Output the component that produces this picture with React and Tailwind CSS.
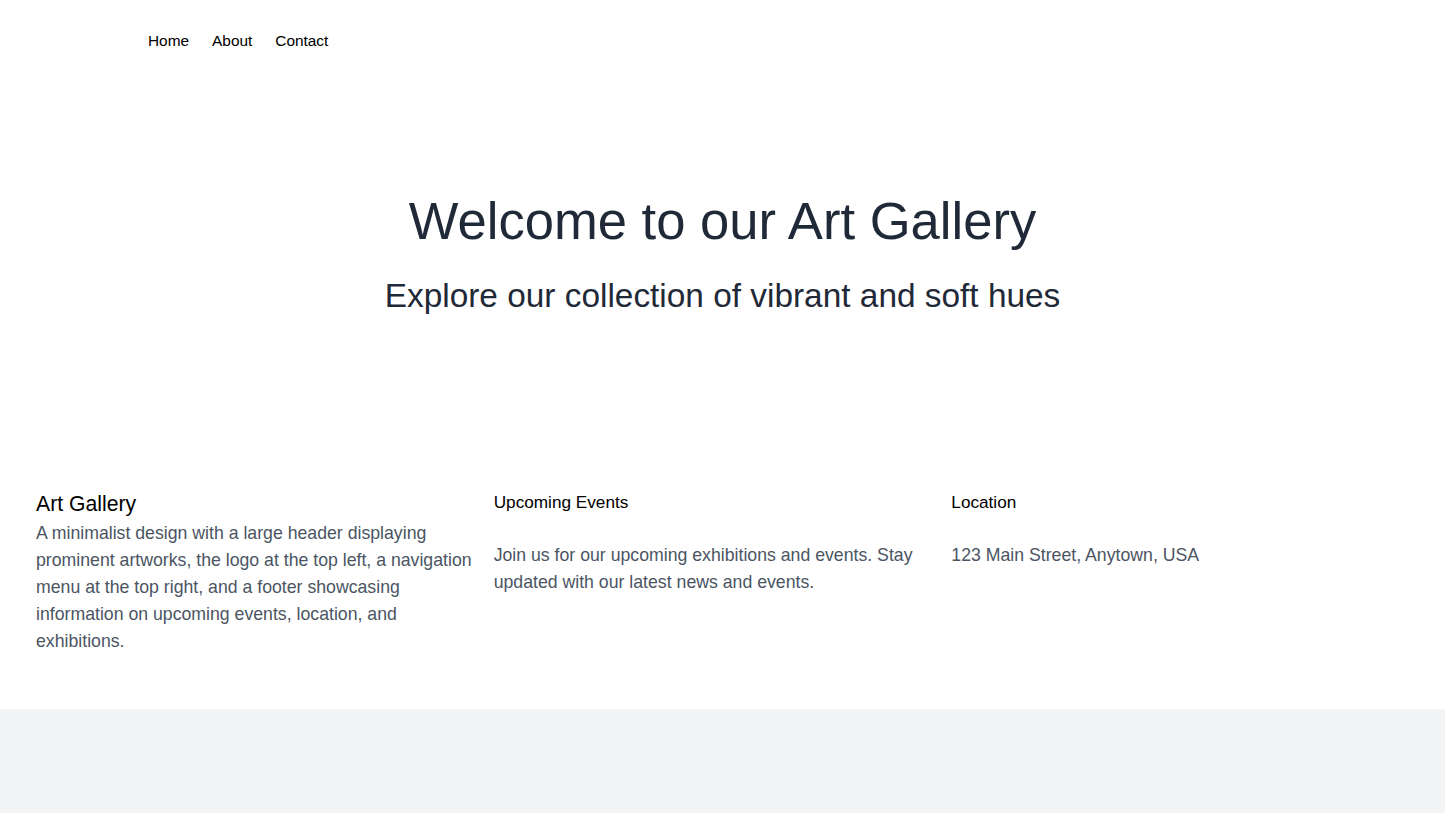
const NAV_LINKS = ["Home", "About", "Contact"];

const COLUMNS = [
  {
    title: "Upcoming Events",
    body: "Join us for our upcoming exhibitions and events. Stay updated with our latest news and events.",
  },
  {
    title: "Location",
    body: "123 Main Street, Anytown, USA",
  },
];

export default function App() {
  return (
    <div className="min-h-screen bg-gray-100 font-['Liberation_Sans',Arial,sans-serif]">
      <div className="bg-white">
        <nav className="flex gap-[23px] pl-[148px] pt-[31px] text-[15.4px] leading-[20px] text-black">
          {NAV_LINKS.map((link) => (
            <a key={link} href="#" className="hover:underline">
              {link}
            </a>
          ))}
        </nav>

        <header className="pt-[141px] text-center text-[#1f2937]">
          <h1 className="text-[52.6px] leading-[57px]">Welcome to our Art Gallery</h1>
          <p className="mt-[30px] text-[33.4px] leading-[33.4px]">
            Explore our collection of vibrant and soft hues
          </p>
        </header>

        <footer className="grid grid-cols-3 px-9 pt-[178px] pb-[54px]">
          <div className="pr-2">
            <h2 className="text-[21.2px] leading-[28px] text-black">Art Gallery</h2>
            <p className="mt-[2px] text-[17.7px] leading-[27px] text-[#4b5563]">
              A minimalist design with a large header displaying prominent artworks, the logo at the
              top left, a navigation menu at the top right, and a footer showcasing information on
              upcoming events, location, and exhibitions.
            </p>
          </div>
          {COLUMNS.map((col) => (
            <div key={col.title} className="pr-4">
              <h3 className="text-[17.2px] leading-[24px] text-black">{col.title}</h3>
              <p className="mt-[28px] text-[17.7px] leading-[27px] text-[#4b5563]">{col.body}</p>
            </div>
          ))}
        </footer>
      </div>
    </div>
  );
}
